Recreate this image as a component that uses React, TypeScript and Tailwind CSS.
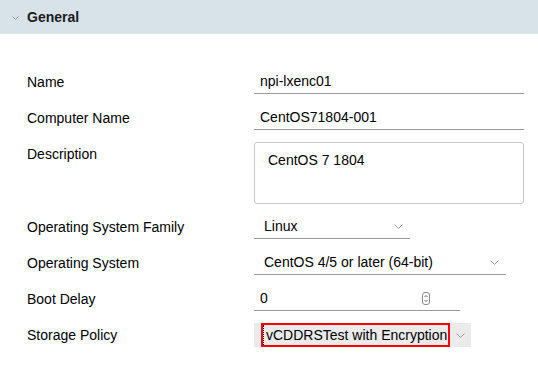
import React from "react";

const Chevron = ({ className = "", w = 9, h = 5, color = "#9a9a9a" }: { className?: string; w?: number; h?: number; color?: string }) => (
  <svg width={w} height={h} viewBox={`0 0 ${w} ${h}`} className={className} fill="none">
    <path d={`M0.5 0.5 L${w / 2} ${h - 0.5} L${w - 0.5} 0.5`} stroke={color} strokeWidth="1" />
  </svg>
);

const Spin = () => (
  <svg width="8" height="13" viewBox="0 0 8 13" fill="none">
    <rect x="0.5" y="0.5" width="7" height="12" rx="2.5" stroke="#8a8a8a" />
    <path d="M2.5 5 L4 3.5 L5.5 5" stroke="#555" strokeWidth="0.9" />
    <path d="M2.5 8 L4 9.5 L5.5 8" stroke="#555" strokeWidth="0.9" />
  </svg>
);

const Label = ({ children }: { children: React.ReactNode }) => (
  <div className="w-[227px] shrink-0 h-6 flex items-center text-[14px] text-black">{children}</div>
);

export default function App() {
  return (
    <div className="w-[538px] h-[377px] bg-white overflow-hidden" style={{ fontFamily: '"Liberation Sans", Arial, sans-serif' }}>
      <div className="h-[34px] bg-[#d8e3e9] flex items-center pl-3">
        <Chevron className="mr-[8px] mt-px" w={7} h={4} color="#8d9aa3" />
        <span className="text-[14px] font-bold text-[#1b1b1b]">General</span>
      </div>
      <div className="pl-[27px] pt-[36px] flex flex-col gap-3">
        <div className="flex">
          <Label>Name</Label>
          <div className="w-[270px] h-6 border-b border-[#9a9a9a] flex items-center pl-[6px] text-[14px] text-black">npi-lxenc01</div>
        </div>
        <div className="flex">
          <Label>Computer Name</Label>
          <div className="w-[270px] h-6 border-b border-[#9a9a9a] flex items-center pl-[6px] text-[14px] text-black">CentOS71804-001</div>
        </div>
        <div className="flex">
          <Label>Description</Label>
          <div className="w-[270px] h-[62px] border border-[#c8c8c8] rounded-[3px] pl-[13px] pt-[7px] text-[14px] text-black">CentOS 7 1804</div>
        </div>
        <div className="flex -mt-px">
          <Label>Operating System Family</Label>
          <div className="w-[156px] h-6 border-b border-[#9a9a9a] flex items-center justify-between pl-[10px] pr-[7px] text-[14px] text-black">
            <span>Linux</span>
            <Chevron />
          </div>
        </div>
        <div className="flex">
          <Label>Operating System</Label>
          <div className="w-[252px] h-6 border-b border-[#9a9a9a] flex items-center justify-between pl-[10px] pr-[7px] text-[14px] text-black">
            <span>CentOS 4/5 or later (64-bit)</span>
            <Chevron />
          </div>
        </div>
        <div className="flex">
          <Label>Boot Delay</Label>
          <div className="w-[206px] h-6 border-b border-[#9a9a9a] flex items-center justify-between pl-[6px] pr-[30px] text-[14px] text-black">
            <span>0</span>
            <Spin />
          </div>
        </div>
        <div className="flex">
          <Label>Storage Policy</Label>
          <div className="w-[217px] h-6 bg-[#ebebeb] flex items-center pl-[7px] text-[14px] text-black">
            <div className="h-6 border-2 border-[#ff0000] flex items-center">
              <span className="h-full flex items-center border-l border-dotted border-black pl-[2px] pr-px">vCDDRSTest with Encryption</span>
            </div>
            <Chevron className="ml-[6px]" />
          </div>
        </div>
      </div>
    </div>
  );
}
